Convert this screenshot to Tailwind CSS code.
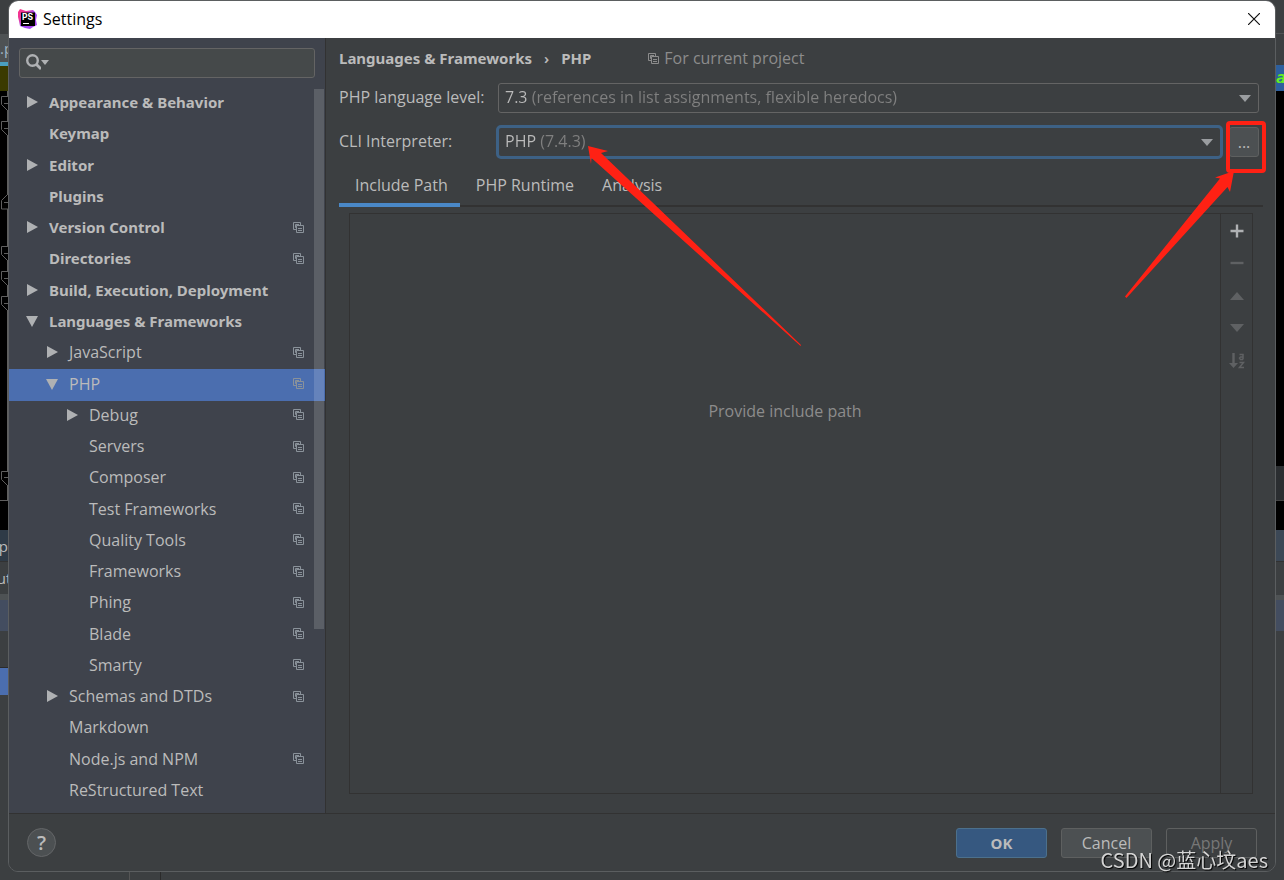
<!DOCTYPE html>
<html lang="en">
<head>
<meta charset="utf-8">
<title>Settings</title>
<script src="https://cdn.jsdelivr.net/npm/@tailwindcss/browser@4"></script>
</head>
<body class="flex h-screen flex-col overflow-hidden bg-[#3c3f41] font-['Open_Sans',sans-serif] text-[16px] leading-5 text-[#bbbbbb]">

<svg class="hidden" aria-hidden="true">
  <symbol id="copy" viewBox="0 0 11 11"><path d="M3 7.500H.5V.5h7V3M3 5.500h-.5V2.500H6M3.500 3.500h7v7h-7zM5 6.500h4M5 8.500h4" fill="none" stroke="currentColor"/></symbol>
  <symbol id="right" viewBox="0 0 12 12"><path d="M1 0v12L12 6z" fill="#afb1b3"/></symbol>
  <symbol id="down" viewBox="0 0 12 12"><path d="M0 1h12L6 12z" fill="#afb1b3"/></symbol>
  <symbol id="drop" viewBox="0 0 12 7"><path d="M0 0h12L6 7z" fill="currentColor"/></symbol>
</svg>

<div class="flex min-h-0 flex-1">
  <!-- editor behind, left edge -->
  <div class="flex w-2 shrink-0 flex-col overflow-hidden text-[15px] whitespace-nowrap" aria-hidden="true">
    <div class="h-[34px] shrink-0"></div>
    <div class="flex h-7 shrink-0 items-center bg-[#4e5254] text-[#a0b4c4]">.p</div>
    <div class="h-1 shrink-0 bg-[#4a9fbf]"></div>
    <div class="h-[25px] shrink-0 bg-[#3a3a00]"></div>
    <div class="h-[439px] shrink-0 bg-black">
      <svg class="h-[439px] w-2" viewBox="0 91 8 439" fill="none" stroke="#5f5f5f">
        <path d="M7.500 91v409M0 500.500h8"/>
        <path fill="#000" d="M9 96.500H1.500v8L9 112M9 121.500H1.500v8L9 137M9 209H1.500v-8.500L9 193M9 246.500H1.500v8L9 262M9 271.500H1.500v8L9 287M9 296.500H1.500v8L9 312M9 471.500H1.500v8L9 487"/>
        <path d="M4 103.500h4M4 128.500h4M4 202.500h4M4 253.500h4M4 278.500h4M4 303.500h4M4 477.500h4"/>
      </svg>
    </div>
    <div class="flex h-[31px] shrink-0 items-center justify-end bg-[#2f3b47]">p</div>
    <div class="flex h-[33px] shrink-0 items-center justify-center border-t border-[#323232]">ut</div>
    <div class="h-1.5 shrink-0 bg-[#4e5254]"></div>
    <div class="h-[31px] shrink-0 bg-[#434d60]"></div>
    <div class="h-[37px] shrink-0 border-b border-[#2b2b2b]"></div>
    <div class="h-[27px] shrink-0 bg-[#4b6eaf]"></div>
  </div>

  <main class="relative flex min-w-0 flex-1 flex-col overflow-hidden rounded-[10px] border border-[#5b5e60]">
    <header class="flex h-[37px] shrink-0 items-center bg-white pr-[11px] pb-0.5 pl-[9px] text-black">
      <svg class="size-5" viewBox="0 0 20 20" aria-hidden="true">
        <defs><linearGradient id="ps" x1="0" y1="0" x2="1" y2="1"><stop offset="0" stop-color="#ff2f86"/><stop offset=".3" stop-color="#e83a9c"/><stop offset=".5" stop-color="#9a46f0"/><stop offset="1" stop-color="#b44cf7"/></linearGradient></defs>
        <path fill="url(#ps)" d="M0 3 2 0l6 2 7-1 2 2 2 3-1 5 1 5-4 2-3 2-5-1-5-2-1-5L0 8z"/>
        <path d="M3 3.500h14v13.500H3z"/>
        <path d="M5 14.500h6" stroke="#fff" stroke-width="1.200"/>
        <text x="4" y="11" font-size="8.500" font-weight="700" fill="#fff" font-family="Inter, sans-serif">PS</text>
      </svg>
      <h1 class="ml-[5px] flex-1">Settings</h1>
      <button class="p-1" aria-label="Close"><svg class="size-3" viewBox="0 0 12 12" stroke="#111" stroke-width="1.200"><path d="m0 0 12 12M12 0 0 12"/></svg></button>
    </header>

    <div class="flex min-h-0 flex-1 bg-[#3c3f41]">
      <aside class="flex w-[317px] shrink-0 flex-col border-r border-[#323232] bg-[#3f434c]">
        <label class="mx-2.5 mt-2.5 flex h-[30px] shrink-0 items-center rounded-[3px] border border-[#646464] bg-[#45494a] px-1.5 pb-0.5 text-[#afb1b3]">
          <svg class="h-4 w-[15px]" viewBox="0 0 15 16" fill="none" stroke="currentColor"><circle cx="6.500" cy="6.500" r="5.300" stroke-width="2.400"/><path d="m10 10 5 5" stroke-width="2.800"/></svg>
          <svg class="h-[5px] w-2" viewBox="0 0 8 5"><path d="M0 0h8L4 5z" fill="currentColor"/></svg>
          <input type="search" aria-label="Search settings" class="min-w-0 flex-1 bg-transparent outline-none">
        </label>
        <nav class="relative mt-[10px] flex min-h-0 flex-1 flex-col pb-1.5" aria-label="Settings" id="tree">
          <div class="absolute top-px right-px h-[540px] w-2.5 bg-white/15"></div>
        </nav>
      </aside>

      <section class="flex min-w-0 flex-1 flex-col pr-3 pl-[13px]">
        <div class="mt-2.5 flex h-5 items-center">
          <h2 class="flex gap-3 font-['Noto_Sans',sans-serif] text-[15px] font-bold"><span>Languages &amp; Frameworks</span><span class="font-semibold">›</span><span>PHP</span></h2>
          <span class="ml-[57px] flex items-center gap-[5px] text-[#8c8c8c]"><svg class="size-[11px]"><use href="#copy"/></svg>For current project</span>
        </div>
        <div class="mt-[15px] mr-1 flex h-[30px] items-center">
          <label for="level" class="w-[159px] shrink-0 pb-0.5">PHP language level:</label>
          <div class="relative flex h-full min-w-0 flex-1 rounded-[3px] border border-[#646464]">
            <select id="level" class="w-full appearance-none bg-[linear-gradient(to_right,#bbbbbb_30px,#808080_30px)] bg-clip-text px-1.5 pb-0.5 text-transparent outline-none"><option class="bg-[#3c3f41] text-[#bbbbbb]">7.3 (references in list assignments, flexible heredocs)</option></select>
            <svg class="pointer-events-none absolute top-[11px] right-[7px] h-[7px] w-3 text-[#9a9da0]"><use href="#drop"/></svg>
          </div>
        </div>
        <div class="mt-3 mr-1 flex h-[34px] items-center">
          <label for="cli" class="w-[157px] shrink-0 pb-0.5">CLI Interpreter:</label>
          <div class="relative flex h-full min-w-0 flex-1 rounded-[5px] border-3 border-[#3d6185]">
            <select id="cli" class="w-full appearance-none bg-[linear-gradient(to_right,#bbbbbb_39px,#808080_39px)] bg-clip-text px-1.5 pb-0.5 text-transparent outline-none"><option class="bg-[#3c3f41] text-[#bbbbbb]">PHP (7.4.3)</option></select>
            <svg class="pointer-events-none absolute top-[11px] right-[7px] h-[7px] w-3 text-[#9a9da0]"><use href="#drop"/></svg>
          </div>
          <button class="relative ml-1.5 h-[30px] w-[30px] shrink-0 rounded-[3px] border border-[#5e6060] bg-[#4c5052]" aria-label="Browse interpreters">...<span class="absolute -top-[7px] -left-1 h-[52px] w-10 rounded-[4px] border-4 border-[#ff2114]"></span></button>
        </div>
        <div class="mt-3 flex h-9 shrink-0 items-stretch" role="tablist">
          <button role="tab" aria-selected="true" class="relative z-1 border-b-4 border-[#4a88c7] pr-3 pb-1 pl-4">Include Path</button>
          <button role="tab" class="border-b-4 border-transparent pr-3 pb-1 pl-4">PHP Runtime</button>
          <button role="tab" class="border-b-4 border-transparent pr-3 pb-1 pl-4">Analysis</button>
        </div>
        <div class="-mt-0.5 h-0.5 shrink-0 bg-[#323232]"></div>
        <div class="mt-1.5 mr-2.5 mb-[19px] ml-2.5 flex min-h-0 flex-1 border border-[#323232]">
          <div class="flex flex-1 items-start justify-center pt-[187px] text-[#8c8c8c]">Provide include path</div>
          <div class="flex w-8 flex-col items-center border-l border-[#323232] pt-px text-[#5f6163]">
            <button class="h-8 text-[#afb1b3]" aria-label="Add"><svg class="size-[14px]" viewBox="0 0 14 14" stroke="currentColor" stroke-width="2.400"><path d="M0.500 7h13M7 .5v13"/></svg></button>
            <button class="h-8" aria-label="Remove"><svg class="size-[14px]" viewBox="0 0 14 14" stroke="currentColor" stroke-width="2.400"><path d="M.5 7h13"/></svg></button>
            <button class="h-[33px]" aria-label="Move up"><svg class="h-2 w-[14px]" viewBox="0 0 14 8" fill="currentColor"><path d="M0 8h14L7 0z"/></svg></button>
            <button class="h-8" aria-label="Move down"><svg class="h-2 w-[14px]" viewBox="0 0 14 8" fill="currentColor"><path d="M0 0h14L7 8z"/></svg></button>
            <button class="h-[33px]" aria-label="Sort"><svg class="size-4" viewBox="0 0 16 16" fill="none" stroke="currentColor"><path d="M4.500 0v11" stroke-width="2.400"/><path d="M0 10h9l-4.500 5z" fill="currentColor" stroke="none"/><path d="M10.500 1.500h3.500V6.500M14 4h-2.500l-1 1 1 1.500H14M10.500 9.500h4l-4 5h4.500" stroke-width="1.500"/></svg></button>
          </div>
        </div>
      </section>
    </div>

    <footer class="flex h-[58px] shrink-0 items-center gap-3.5 border-t border-[#323232] bg-[#3c3f41] pr-[18px] pl-[18px]">
      <button class="size-[29px] rounded-full border border-[#646668] bg-[#4c5052] text-xl font-semibold" aria-label="Help">?</button>
      <span class="flex-1"></span>
      <button class="h-[30px] w-[91px] rounded-[3px] border border-[#4c708c] bg-[#365880] font-['Noto_Sans',sans-serif] text-[15px] font-bold">OK</button>
      <button class="h-[30px] w-[91px] rounded-[3px] border border-[#5e6060] bg-[#4c5052]">Cancel</button>
      <button class="h-[30px] w-[91px] rounded-[3px] border border-[#5e6060] text-[#777777]" disabled>Apply</button>
    </footer>

    <!-- annotation arrows -->
    <svg class="pointer-events-none absolute top-0 left-0 h-[400px] w-[820px]" viewBox="9 1 820 400" fill="#ff2114" aria-hidden="true"><path d="m588 146 20 5-7 2 200 192-.5 1-209-188-.500 6z"/></svg>
    <svg class="pointer-events-none absolute top-[167px] right-[34px] h-[134px] w-[116px]" viewBox="1125 168 116 134" fill="#ff2114" aria-hidden="true"><path d="m1234 171-19 6.500 5 1-95 118 1.500 1.500 101-111 2.500 5z"/></svg>
  </main>

  <!-- editor behind, right edge -->
  <div class="flex w-2 shrink-0 flex-col overflow-hidden" aria-hidden="true">
    <div class="h-[34px] shrink-0 border-b border-[#515355]"></div>
    <div class="h-[31px] shrink-0"></div>
    <div class="flex h-[26px] shrink-0 items-center bg-[#2d5f9e] font-['DejaVu_Sans_Mono',monospace] font-bold text-[#66ee22] italic">a</div>
    <div class="h-[375px] shrink-0 bg-black"></div>
    <div class="h-[35px] shrink-0 border-b border-[#444444] bg-[#2b2e31]"></div>
    <div class="h-[29px] shrink-0 bg-black"></div>
    <div class="h-[31px] shrink-0 bg-[#3c4856]"></div>
    <div class="h-[34px] shrink-0 border-t border-[#323232]"></div>
    <div class="h-[5px] shrink-0 bg-[#4e5254]"></div>
    <div class="h-[31px] shrink-0 bg-[#434d60]"></div>
  </div>
</div>
<div class="flex h-2 shrink-0 pl-[129px]" aria-hidden="true"><div class="w-8 border-x border-l-[#555555] border-r-[#2b2b2b]"></div></div>

<div class="pointer-events-none fixed right-4 bottom-1 font-['Noto_Sans_CJK_SC',sans-serif] text-[20px] leading-8 text-[#d4d4d4] text-shadow-[1px_1px_1px_#000000]">CSDN @蓝心坟aes</div>

<script>
const rows = [
  [0, 'r', 'Appearance & Behavior', 0], [0, '', 'Keymap', 0], [0, 'r', 'Editor', 0], [0, '', 'Plugins', 0],
  [0, 'r', 'Version Control', 1], [0, '', 'Directories', 1], [0, 'r', 'Build, Execution, Deployment', 0],
  [0, 'd', 'Languages & Frameworks', 0], [1, 'r', 'JavaScript', 1], [1, 'd', 'PHP', 1], [2, 'r', 'Debug', 1],
  [2, '', 'Servers', 1], [2, '', 'Composer', 1], [2, '', 'Test Frameworks', 1], [2, '', 'Quality Tools', 1],
  [2, '', 'Frameworks', 1], [2, '', 'Phing', 1], [2, '', 'Blade', 1], [2, '', 'Smarty', 1],
  [1, 'r', 'Schemas and DTDs', 1], [1, '', 'Markdown', 0], [1, '', 'Node.js and NPM', 1], [1, '', 'ReStructured Text', 0]
];
const indent = ["pl-[17px] font-['Noto_Sans',sans-serif] text-[15px] font-bold", 'pl-[37px]', 'pl-[57px]'];
const arrows = { r: '<use href="#right"/>', d: '<use href="#down"/>', '': '' };
document.getElementById('tree').insertAdjacentHTML('afterbegin', rows.map(([level, arrow, name, project]) =>
  `<a href="#" class="flex min-h-0 flex-1 items-center pr-5 pb-[3px] ${indent[level]} ${name === 'PHP' ? 'bg-[#4b6eaf]' : ''}">
    <svg class="mr-[11px] size-3 shrink-0">${arrows[arrow]}</svg><span class="flex-1">${name.replace('&', '&amp;')}</span>
    ${project ? '<svg class="mr-px size-[11px] text-[#8a929a]"><use href="#copy"/></svg>' : ''}</a>`).join(''));
</script>
</body>
</html>
